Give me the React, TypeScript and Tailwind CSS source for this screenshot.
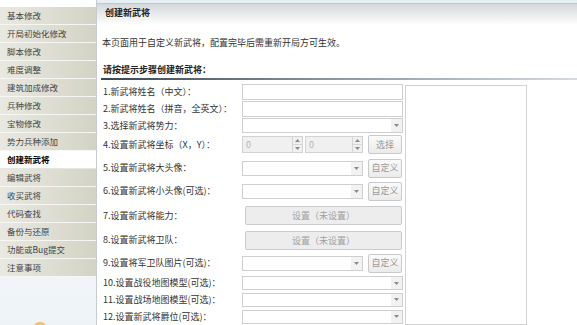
import React from 'react';

const FONT = { fontFamily: '"Noto Sans CJK SC", "Noto Sans", sans-serif' };

const MENU = [
  '基本修改',
  '开局初始化修改',
  '脚本修改',
  '难度调整',
  '建筑加成修改',
  '兵种修改',
  '宝物修改',
  '势力兵种添加',
  '创建新武将',
  '编辑武将',
  '收买武将',
  '代码查找',
  '备份与还原',
  '功能或Bug提交',
  '注意事项',
];

const Arrow = ({ up = false }: { up?: boolean }) => (
  <svg width="5" height="3" viewBox="0 0 5 3" className={up ? 'rotate-180' : ''}>
    <path d="M0 0 L5 0 L2.5 3 Z" fill="#8a8a8a" />
  </svg>
);

const TextInput = () => <div className="w-full h-[16px] border border-[#cfcfcf] bg-white" />;

const Select = ({ h = 'h-[15px]', w = 'w-full' }: { h?: string; w?: string }) => (
  <div className={`${w} ${h} border border-[#cfcfcf] bg-white flex justify-end`}>
    <div className="w-[11px] h-full bg-[#f2f2f2] flex items-center justify-center">
      <Arrow />
    </div>
  </div>
);

const Spinner = ({ w }: { w: string }) => (
  <div className={`${w} h-[17px] border border-[#d2d2d2] bg-[#f0f0f0] flex`}>
    <span className="flex-1 pl-[3px] text-[9px] leading-[15px] text-[#b0b0b0]">0</span>
    <div className="w-[10px] h-full border-l border-[#d6d6d6] flex flex-col">
      <div className="flex-1 flex items-center justify-center border-b border-[#d6d6d6]">
        <Arrow up />
      </div>
      <div className="flex-1 flex items-center justify-center">
        <Arrow />
      </div>
    </div>
  </div>
);

const SmallButton = ({ label }: { label: string }) => (
  <div className="w-[34px] h-[19px] shrink-0 border border-[#c9c9c9] rounded-[2px] bg-gradient-to-b from-[#fafafa] to-[#ebebeb] flex items-center justify-center text-[9px] text-[#9a9a9a]">
    {label}
  </div>
);

const WideButton = ({ label }: { label: string }) => (
  <div className="ml-[3px] w-[157px] h-[19px] border border-[#cacaca] rounded-[2px] bg-[#ededed] flex items-center justify-center text-[9px] text-[#a0a0a0]">
    {label}
  </div>
);

interface Row {
  label: string;
  h: string;
  control: React.ReactNode;
}

const ROWS: Row[] = [
  { label: '1.新武将姓名（中文）：', h: 'h-[17px]', control: <TextInput /> },
  { label: '2.新武将姓名（拼音，全英文）：', h: 'h-[17px]', control: <TextInput /> },
  { label: '3.选择新武将势力：', h: 'h-[17px]', control: <Select /> },
  {
    label: '4.设置新武将坐标（X，Y）：',
    h: 'h-[22px]',
    control: (
      <div className="flex items-center">
        <Spinner w="w-[61px]" />
        <div className="ml-[2px]">
          <Spinner w="w-[58px]" />
        </div>
        <div className="ml-[5px]">
          <SmallButton label="选择" />
        </div>
      </div>
    ),
  },
  {
    label: '5.设置新武将大头像：',
    h: 'h-[25px]',
    control: (
      <div className="flex items-center gap-[5px]">
        <Select w="w-[121px]" />
        <SmallButton label="自定义" />
      </div>
    ),
  },
  {
    label: '6.设置新武将小头像(可选)：',
    h: 'h-[22px]',
    control: (
      <div className="flex items-center gap-[5px]">
        <Select w="w-[121px]" />
        <SmallButton label="自定义" />
      </div>
    ),
  },
  { label: '7.设置新武将能力：', h: 'h-[28px]', control: <WideButton label="设置（未设置）" /> },
  { label: '8.设置新武将卫队：', h: 'h-[22px]', control: <WideButton label="设置（未设置）" /> },
  {
    label: '9.设置将军卫队图片(可选)：',
    h: 'h-[24px]',
    control: (
      <div className="flex items-center gap-[5px]">
        <Select w="w-[121px]" />
        <SmallButton label="自定义" />
      </div>
    ),
  },
  { label: '10.设置战役地图模型(可选)：', h: 'h-[17px]', control: <Select h="h-[14px]" /> },
  { label: '11.设置战场地图模型(可选)：', h: 'h-[17px]', control: <Select h="h-[14px]" /> },
  { label: '12.设置新武将爵位(可选)：', h: 'h-[17px]', control: <Select h="h-[14px]" /> },
];

export default function App() {
  return (
    <div style={FONT} className="w-[577px] h-[325px] overflow-hidden bg-white flex text-[#333]">
      {/* Sidebar */}
      <aside className="relative w-[97px] shrink-0 border-r border-[#c8ccd0] bg-gradient-to-b from-white to-[#eef3f7] pt-[7px] flex flex-col">
        {MENU.map((item) => {
          const active = item === '创建新武将';
          return (
            <div
              key={item}
              className={`h-[18px] pl-[7px] flex items-center text-[8.5px] border-b ${
                active
                  ? 'bg-white font-bold text-black border-[#e6e6e0]'
                  : 'bg-gradient-to-r from-[#e9e9e2] to-[#d3d3c5] text-[#444] border-[#f6f6f2]'
              }`}
            >
              {item}
            </div>
          );
        })}
        <div className="absolute -bottom-[7px] left-[34px] w-[12px] h-[10px] rounded-full bg-[#f3c27a]" />
      </aside>

      {/* Main */}
      <main className="flex-1 flex flex-col min-w-0">
        <div className="h-[3px] bg-[#e6eff3]" />
        <div className="h-[22px] border-t border-[#c2c6ca] bg-gradient-to-b from-[#d5d8db] to-white pl-[8px] pt-[3px] text-[9px] leading-[12px] font-bold text-[#222]">
          创建新武将
        </div>

        <p className="mt-[12px] pl-[5px] text-[9px] leading-[12px]">本页面用于自定义新武将，配置完毕后需重新开局方可生效。</p>

        <h2 className="mt-[15px] pl-[6px] text-[9px] leading-[12px] font-bold text-[#222]">请按提示步骤创建新武将：</h2>
        <div className="mt-[2px] ml-[4px] h-[2px] bg-gradient-to-r from-[#3b4652] via-[#8e98a2] to-[#d4dbe0]" />

        <div className="mt-[4px] flex flex-1 min-h-0">
          <div className="flex flex-col pl-[6px]">
            {ROWS.map((row) => (
              <div key={row.label} className={`${row.h} flex items-center`}>
                <span className="w-[139px] shrink-0 text-[9px] leading-[12px] whitespace-nowrap">{row.label}</span>
                <div className="w-[161px]">{row.control}</div>
              </div>
            ))}
          </div>
          <div className="ml-[2px] mt-[1px] w-[122px] border border-[#d2d2d2] bg-white" />
        </div>
      </main>
    </div>
  );
}
